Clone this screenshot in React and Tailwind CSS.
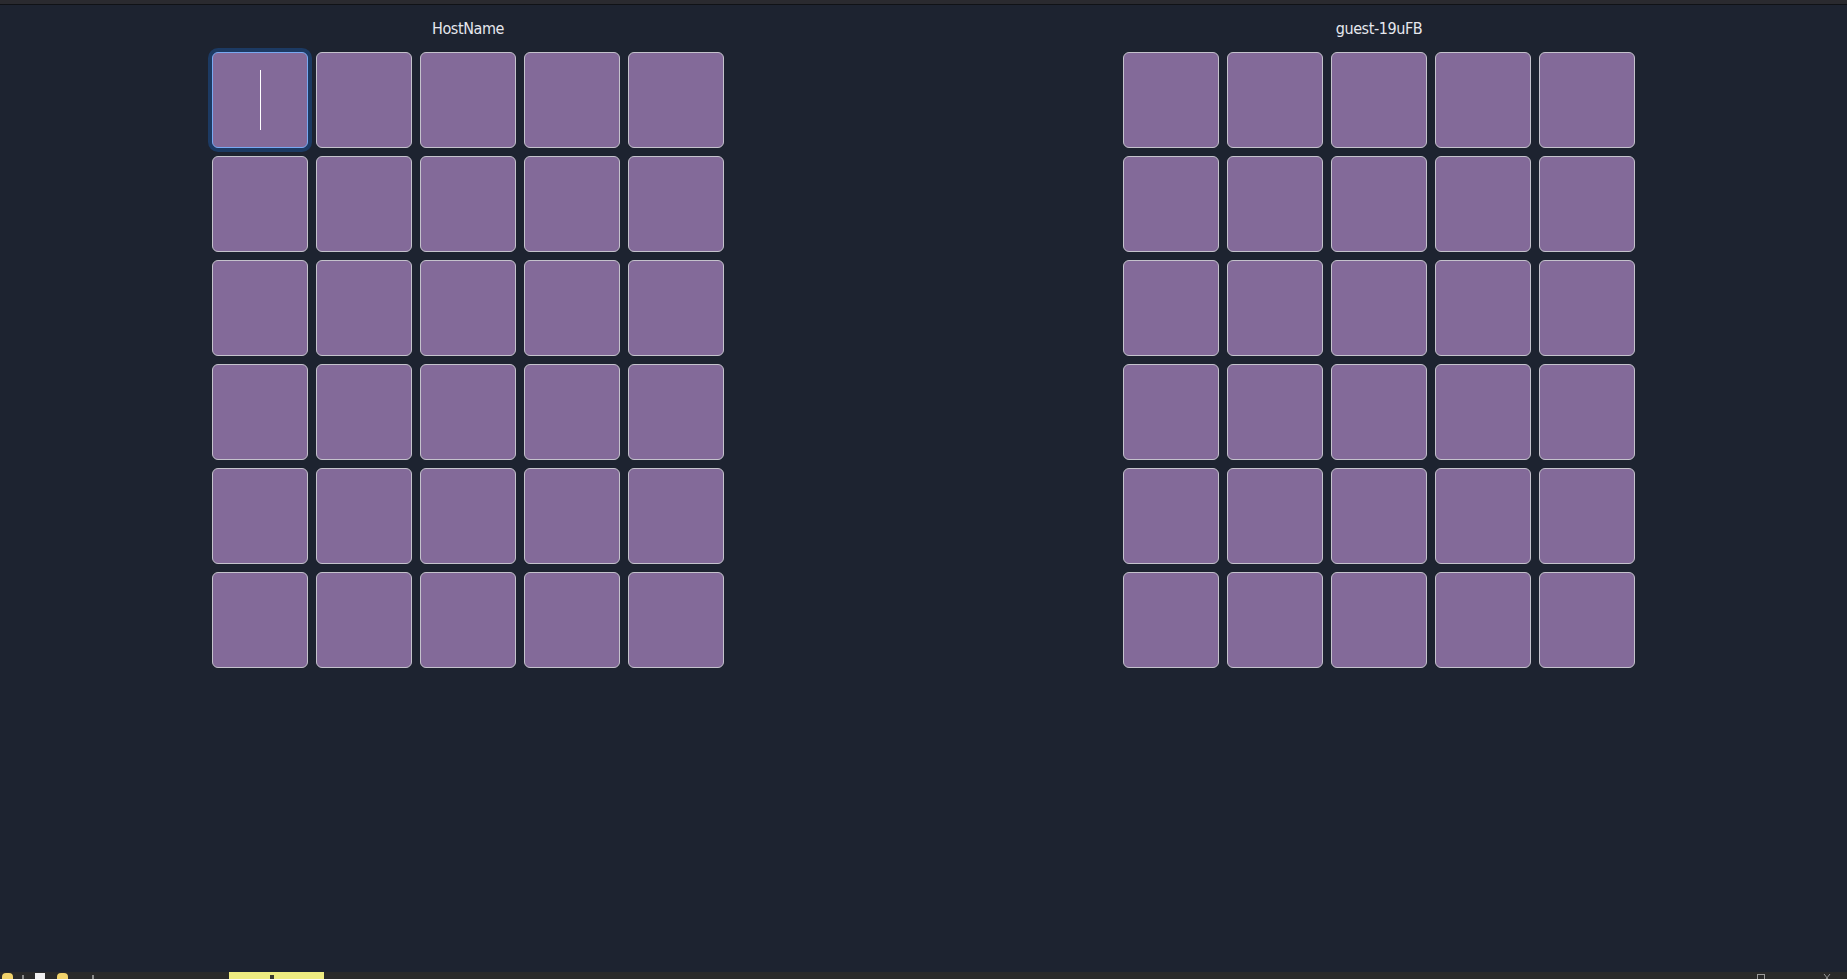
import React from "react";

const ROWS = 6;
const COLS = 5;

const Tile = ({ active }) => {
  if (active) {
    return (
      <div className="w-24 h-24 rounded-md bg-[#836a99] border border-[#78a9f2] shadow-[0_0_0_4px_#1c3a63] flex items-center justify-center">
        <div className="w-px h-[60px] bg-white" />
      </div>
    );
  }
  return <div className="w-24 h-24 rounded-md bg-[#836a99] border border-[#c4c2cc]" />;
};

const Board = ({ name, focusFirst }) => {
  return (
    <div className="flex flex-col items-center">
      <p
        className="text-[16px] leading-6 tracking-[-0.4px] text-[#e6e8ee] mt-[2px] mb-[11px]"
        style={{ fontFamily: '"Liberation Sans Narrow", "DejaVu Sans Condensed", "Liberation Sans", sans-serif' }}
      >
        {name}
      </p>
      <div className="grid grid-cols-5 gap-2">
        {Array.from({ length: ROWS * COLS }).map((_, i) => (
          <Tile key={i} active={focusFirst && i === 0} />
        ))}
      </div>
    </div>
  );
};

export default function App() {
  return (
    <div className="h-screen w-full flex flex-col bg-[#1d2330] overflow-hidden">
      {/* Top strip */}
      <div className="h-[5px] bg-[#2a2a2f] border-b border-[#101216] shrink-0" />

      {/* Boards */}
      <main className="flex-1 flex justify-center gap-[399px] pt-[10px]">
        <Board name="HostName" focusFirst />
        <Board name="guest-19uFB" />
      </main>

      {/* Taskbar peeking at the bottom */}
      <div className="h-[7px] bg-[#2a2a2a] shrink-0 flex items-start">
        <div className="ml-[2px] mt-[1px] w-[11px] h-[6px] bg-[#f2d36b] rounded-t-sm" />
        <div className="ml-[9px] mt-[3px] w-[2px] h-[4px] bg-[#8a8a8a]" />
        <div className="ml-[11px] mt-[1px] w-[10px] h-[6px] bg-[#f0f0f0]" />
        <div className="ml-[12px] mt-[1px] w-[11px] h-[6px] bg-[#f2d36b] rounded-t-sm" />
        <div className="ml-[24px] mt-[3px] w-[2px] h-[4px] bg-[#8a8a8a]" />
        <div className="ml-[135px] w-[95px] h-[7px] bg-[#eeeb80] flex justify-center">
          <div className="mt-[3px] -ml-[10px] w-[4px] h-[4px] bg-[#3a3a30]" />
        </div>
        <div className="ml-auto mr-[58px] mt-[2px] w-[8px] h-[5px] border border-b-0 border-[#9a9a9a]" />
        <svg className="mr-[16px] mt-[2px]" width="8" height="5" viewBox="0 0 8 5">
          <path d="M1 0 L5 5 M7 0 L3 5" stroke="#9a9a9a" strokeWidth="1" />
        </svg>
      </div>
    </div>
  );
}
